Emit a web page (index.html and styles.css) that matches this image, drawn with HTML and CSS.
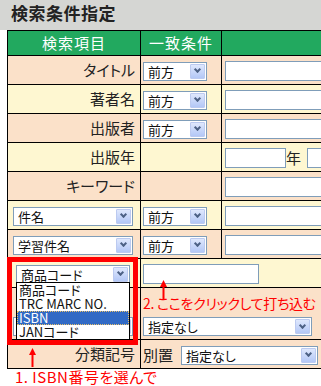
FILE: index.html
```html
<!DOCTYPE html>
<html lang="ja">
<head>
  <meta charset="UTF-8" />
  <meta name="viewport" content="width=device-width, initial-scale=1.0"/>
  <title>検索条件指定</title>
  <link rel="stylesheet" href="styles.css">
</head>
<body>

  <div class="page">
    <div class="title">検索条件指定</div>

    <table class="search">
      <colgroup>
        <col class="col-item">
        <col class="col-cond">
        <col class="col-field">
      </colgroup>
      <tr class="head">
        <th>検索項目</th>
        <th>一致条件</th>
        <th></th>
      </tr>
      <tr class="odd">
        <td class="label">タイトル</td>
        <td class="cond"><span class="sel w-cond"><span>前方</span><span class="sel-btn"></span></span></td>
        <td class="field"><input class="box w-long" type="text"></td>
      </tr>
      <tr class="even">
        <td class="label">著者名</td>
        <td class="cond"><span class="sel w-cond"><span>前方</span><span class="sel-btn"></span></span></td>
        <td class="field"><input class="box w-long" type="text"></td>
      </tr>
      <tr class="odd">
        <td class="label">出版者</td>
        <td class="cond"><span class="sel w-cond"><span>前方</span><span class="sel-btn"></span></span></td>
        <td class="field"><input class="box w-long" type="text"></td>
      </tr>
      <tr class="even">
        <td class="label">出版年</td>
        <td class="cond"></td>
        <td class="field year"><input class="box w-year" type="text"><span class="unit">年</span><input class="box w-year" type="text"></td>
      </tr>
      <tr class="odd">
        <td class="label">キーワード</td>
        <td class="cond"></td>
        <td class="field"><input class="box w-long" type="text"></td>
      </tr>
      <tr class="even">
        <td class="item"><span class="sel w-item"><span>件名</span><span class="sel-btn"></span></span></td>
        <td class="cond"><span class="sel w-cond"><span>前方</span><span class="sel-btn"></span></span></td>
        <td class="field"><input class="box w-long" type="text"></td>
      </tr>
      <tr class="odd">
        <td class="item"><span class="sel w-item"><span>学習件名</span><span class="sel-btn"></span></span></td>
        <td class="cond"><span class="sel w-cond"><span>前方</span><span class="sel-btn"></span></span></td>
        <td class="field"><input class="box w-long" type="text"></td>
      </tr>
      <tr class="even">
        <td class="item code"><span class="sel w-code"><span>商品コード</span><span class="sel-btn"></span></span></td>
        <td class="cond" colspan="2"><input class="box w-code-input" type="text"></td>
      </tr>
      <tr class="odd tall">
        <td class="item"><span class="sel w-item"><span></span><span class="sel-btn"></span></span></td>
        <td class="cond" colspan="2"><span class="sel w-wide"><span>指定なし</span><span class="sel-btn"></span></span></td>
      </tr>
      <tr class="odd">
        <td class="label">分類記号</td>
        <td class="cond" colspan="2"><span class="extra">別置</span><span class="sel w-place"><span>指定なし</span><span class="sel-btn"></span></span></td>
      </tr>
    </table>

    <ul class="dropdown">
      <li>商品コード</li>
      <li>TRC MARC NO.</li>
      <li class="selected">ISBN</li>
      <li>JANコード</li>
    </ul>

    <div class="frame"></div>

    <svg class="arrow arrow-one" width="9" height="19" viewBox="0 0 9 19">
      <polygon points="4.5,0 1,7 8,7" fill="#ff0000"/>
      <rect x="3.5" y="6" width="2" height="13" fill="#ff0000"/>
    </svg>
    <svg class="arrow arrow-two" width="9" height="19" viewBox="0 0 9 19">
      <polygon points="4.5,0 1,7 8,7" fill="#ff0000"/>
      <rect x="3.5" y="6" width="2" height="13" fill="#ff0000"/>
    </svg>

    <div class="note note-one">1. ISBN番号を選んで</div>
    <div class="note note-two">2. ここをクリックして打ち込む</div>
  </div>

</body>
</html>
```

FILE: styles.css
```css
html, body {
  margin: 0;
  padding: 0;
  overflow: hidden;
}

body {
  font-family: "Noto Sans CJK JP", "Noto Sans", sans-serif;
  font-feature-settings: "palt";
  color: #222;
  background-color: #fff;
}

.page {
  position: relative;
  width: 321px;
  height: 386px;
  overflow: hidden;
}

.title {
  height: 30px;
  background-color: #d5d6d3;
  font-size: 17px;
  font-weight: bold;
  line-height: 25px;
  padding-left: 11px;
  letter-spacing: 0.5px;
}

.search {
  border-collapse: collapse;
  table-layout: fixed;
  width: 420px;
  margin-left: 7px;
}

.col-item {
  width: 133px;
}

.col-cond {
  width: 81px;
}

.search th,
.search td {
  border: 1px solid #000;
  padding: 0;
  height: 28px;
  line-height: 18px;
  white-space: nowrap;
}

.search th {
  height: 24px;
  background-color: #22a95f;
  color: #fff;
  font-size: 15px;
  font-weight: normal;
  letter-spacing: 1px;
}

.odd td {
  background-color: #fbe1c9;
}

.even td {
  background-color: #fef7d1;
}

.label {
  text-align: right;
  padding-right: 5px !important;
  font-size: 15px;
}

.item {
  padding-left: 5px !important;
}

.item.code {
  padding-left: 8px !important;
}

.cond {
  padding-left: 2px !important;
}

.field {
  padding-left: 3px !important;
}

.tall td {
  height: 48px;
  vertical-align: bottom;
  padding-bottom: 3px !important;
}

.sel {
  display: inline-flex;
  align-items: center;
  justify-content: space-between;
  box-sizing: border-box;
  height: 19px;
  border: 1px solid #7f9db9;
  background-color: #fff;
  padding: 0 1px 0 4px;
  font-size: 13px;
  line-height: 15px;
  color: #111;
  vertical-align: middle;
}

.sel-btn {
  display: flex;
  align-items: center;
  justify-content: center;
  box-sizing: border-box;
  width: 15px;
  height: 15px;
  border: 1px solid #bccaf0;
  border-radius: 1px;
  background: linear-gradient(#dfe8fd, #b3c7f6);
}

.sel-btn::after {
  content: "";
  width: 3px;
  height: 3px;
  margin-top: -3px;
  border-right: 2px solid #4d6185;
  border-bottom: 2px solid #4d6185;
  transform: rotate(45deg);
}

.w-cond {
  width: 64px;
}

.w-item {
  width: 120px;
}

.w-code {
  width: 114px;
}

.w-wide {
  width: 169px;
}

.w-place {
  width: 137px;
}

.box {
  box-sizing: border-box;
  height: 20px;
  border: 1px solid #7f9db9;
  background-color: #fff;
  padding: 0;
  margin: 0;
  vertical-align: middle;
}

.w-long {
  width: 200px;
}

.w-year {
  width: 61px;
}

.w-code-input {
  width: 116px;
}

.unit {
  display: inline-block;
  width: 21px;
  font-size: 15px;
  vertical-align: middle;
}

.extra {
  display: inline-block;
  width: 38px;
  font-size: 15px;
  vertical-align: middle;
}

.dropdown {
  position: absolute;
  left: 16px;
  top: 282px;
  width: 114px;
  box-sizing: border-box;
  margin: 0;
  padding: 0;
  list-style: none;
  border: 1px solid #000;
  background-color: #fff;
  font-size: 13px;
  line-height: 14px;
  color: #111;
}

.dropdown li {
  height: 14px;
  padding-left: 2px;
}

.dropdown .selected {
  background-color: #316ac5;
  color: #fff;
  outline: 1px dotted #e8c06a;
  outline-offset: -1px;
}

.frame {
  position: absolute;
  left: 7px;
  top: 257px;
  width: 131px;
  height: 88px;
  box-sizing: border-box;
  border: 5px solid #ff0000;
}

.arrow {
  position: absolute;
}

.arrow-one {
  left: 28px;
  top: 348px;
}

.arrow-two {
  left: 159px;
  top: 280px;
}

.note {
  position: absolute;
  color: #ff0000;
  font-size: 14px;
  line-height: 16px;
  white-space: nowrap;
}

.note-one {
  left: 15px;
  top: 369px;
  font-size: 15px;
  letter-spacing: 0.5px;
}

.note-two {
  left: 143px;
  top: 295px;
  letter-spacing: -0.3px;
}
```
